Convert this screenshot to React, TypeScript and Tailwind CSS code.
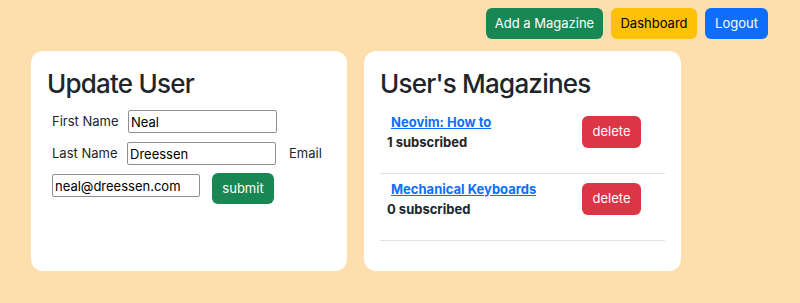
import React from "react";

const font = { fontFamily: "Inter, 'Noto Sans', sans-serif" };

function Item({ name, count }: { name: string; count: number }) {
  return (
    <div className="flex items-center border-b border-[#dee2e6] pt-[5px] pb-[21px]">
      <div className="w-[202px] pl-[7px] text-[13px] font-bold leading-[20px] text-[#212529]">
        <a href="#" className="ml-[4px] text-[#0d6efd] underline">
          {name}
        </a>
        <div>{count} subscribed</div>
      </div>
      <button className="h-[32px] w-[59px] rounded-md bg-[#dc3545] text-[13px] text-white">
        delete
      </button>
    </div>
  );
}

export default function App() {
  return (
    <div className="min-h-[303px] w-[800px] bg-[#ffdead]" style={font}>
      <div className="flex justify-end gap-2 pt-2 pr-8">
        <button className="h-[31px] w-[117px] rounded-md bg-[#198754] text-[13px] text-white">
          Add a Magazine
        </button>
        <button className="h-[31px] w-[86px] rounded-md bg-[#ffc107] text-[13px] text-black">
          Dashboard
        </button>
        <button className="h-[31px] w-[63px] rounded-md bg-[#0d6efd] text-[13px] text-white">
          Logout
        </button>
      </div>
      <div className="mt-[12px] flex items-stretch gap-[17px] pl-[31px]">
        <div className="w-[316px] rounded-xl bg-white px-4 pt-4 pb-[30px]">
          <h2 className="text-[26px] font-medium leading-[34px] tracking-[-0.03em] text-[#212529]">
            Update User
          </h2>
          <div className="mt-[9px] pl-[5px] text-[13px] text-[#212529]">
            <div className="flex items-center">
              <label className="w-[76px]">First Name</label>
              <input
                defaultValue="Neal"
                className="h-[23px] w-[149px] rounded-[2px] border border-[#8f8f8f] px-[2px] text-[13px] text-black"
              />
            </div>
            <div className="mt-[9px] flex items-center">
              <label className="w-[75px]">Last Name</label>
              <input
                defaultValue="Dreessen"
                className="h-[23px] w-[149px] rounded-[2px] border border-[#8f8f8f] px-[2px] text-[13px] text-black"
              />
              <label className="ml-[13px]">Email</label>
            </div>
            <div className="mt-2 flex items-start">
              <input
                defaultValue="neal@dreessen.com"
                className="mt-px h-[23px] w-[148px] rounded-[2px] border border-[#8f8f8f] px-[2px] text-[13px] text-black"
              />
              <button className="ml-3 h-[31px] w-[62px] rounded-md bg-[#198754] text-[13px] text-white">
                submit
              </button>
            </div>
          </div>
        </div>
        <div className="w-[317px] rounded-xl bg-white px-4 pt-4 pb-[30px]">
          <h2 className="text-[26px] font-medium leading-[34px] tracking-[-0.03em] text-[#212529]">
            User's Magazines
          </h2>
          <div className="mt-[6px]">
            <Item name="Neovim: How to" count={1} />
            <Item name="Mechanical Keyboards" count={0} />
          </div>
        </div>
      </div>
    </div>
  );
}
